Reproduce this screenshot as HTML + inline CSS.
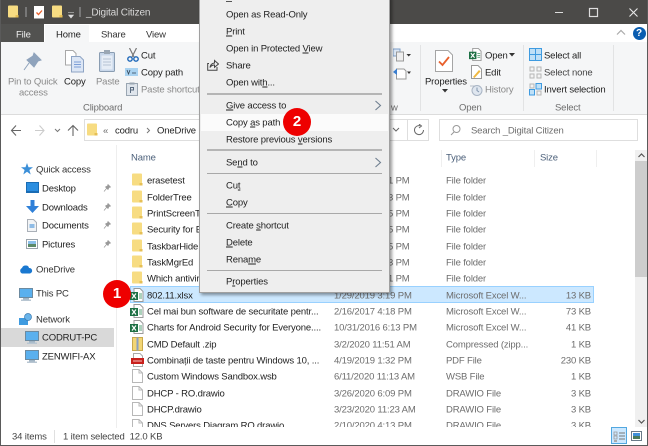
<!DOCTYPE html>
<html><head><meta charset="utf-8"><style>
html,body{margin:0;padding:0;background:#fff}
#w{position:relative;width:648px;height:446px;overflow:hidden;background:#fff;font:9.5px/12px "Liberation Sans",sans-serif;letter-spacing:-.15px;color:#222;filter:blur(.3px)}
#w div,#w svg{position:absolute}
.t{white-space:nowrap;transform:translateY(-4.500px)}
.g{color:#6d6d6d}.l{color:#8a8a8a}.n{color:#555}
.r{text-align:right;width:60px}
u{text-underline-offset:1px}
</style></head><body><div id="w">

<svg width="0" height="0" style="position:absolute"><defs>
<symbol id="fo" viewBox="0 0 11 13"><path d="M0 1.500Q0 .5 1 .5H9Q10 .5 10 1.500V12.500H1Q0 12.500 0 11.500Z" fill="#f7dc82"/><path d="M7.500 10H10.500V12.500H7.500Z" fill="#e6bf55"/></symbol>
<symbol id="xl" viewBox="0 0 14 14"><path d="M4 .5H10L13 3.500V13.500H4Z" fill="#fff" stroke="#9a9a9a"/><rect x="0" y="4" width="8" height="8" fill="#1e7145"/><path d="M2 5.500L6 10.500M6 5.500L2 10.500" stroke="#fff" stroke-width="1.200"/><path d="M9 6H12M9 8H12M9 10H12" stroke="#5aa57a"/></symbol>
<symbol id="dc" viewBox="0 0 11 14"><path d="M.5 .5H7L10.500 4V13.500H.5Z" fill="#fff" stroke="#b8b8b8"/><path d="M7 .5V4H10.500" fill="none" stroke="#b8b8b8"/></symbol>
<symbol id="pc" viewBox="0 0 14 13"><rect x=".5" y=".5" width="13" height="9" fill="#5ab0ee" stroke="#6c8aa0"/><rect x="4" y="10" width="6" height="2" fill="#a0b4c4"/><rect x="2" y="11.500" width="10" height="1.500" fill="#b8c6d2"/></symbol>
<symbol id="pin" viewBox="0 0 8 9"><path d="M5 .5L7.500 3L6 3.500L5 5.500L2.500 3L4.500 2ZM3.500 4.500L1 7.500" fill="#999" stroke="#999" stroke-width=".7"/></symbol>
</defs></svg>

<!-- title bar -->
<div style="left:0;top:0;width:648px;height:24px;background:#4b4a48"></div>
<svg style="left:8px;top:5px" width="11" height="13"><use href="#fo"/></svg>
<div style="left:25px;top:7px;width:2px;height:10px;background:#777"></div>
<svg style="left:34px;top:6px" width="11" height="13" viewBox="0 0 11 13"><rect width="10" height="12.500" fill="#fff"/><path d="M2.500 6.500L4.500 8.500L8 4.500" fill="none" stroke="#e8602c" stroke-width="1.300"/></svg>
<svg style="left:52px;top:5px" width="11" height="13"><use href="#fo"/></svg>
<svg style="left:68px;top:12px" width="6" height="7"><path d="M0 .5H6M.5 3H5.500L3 6Z" fill="#ddd" stroke="#ddd" stroke-width=".6"/></svg>
<div style="left:79px;top:7px;width:2px;height:10px;background:#777"></div>
<div class="t" style="left:86px;top:12px;color:#d8d8d8;font-size:10px">_Digital Citizen</div>
<svg style="left:550px;top:5px" width="95" height="15"><path d="M5 7.500H13" stroke="#ddd"/><rect x="39.500" y="3.500" width="8" height="8" fill="none" stroke="#ddd" stroke-width="1.200"/><path d="M79.500 3.500L87.500 11.500M87.500 3.500L79.500 11.500" stroke="#e8e8e8" stroke-width="1.100"/></svg>

<!-- tabs -->
<div style="left:0;top:24px;width:44px;height:18px;background:#525250"></div>
<div class="t" style="left:16px;top:33.500px;color:#eee">File</div>
<div style="left:45px;top:25px;width:44px;height:18px;background:#f5f6f7;z-index:1"></div>
<div class="t" style="left:56px;top:33.500px;z-index:2">Home</div>
<div class="t" style="left:101px;top:33.500px;color:#333">Share</div>
<div class="t" style="left:146px;top:33.500px;color:#333">View</div>
<svg style="left:616px;top:29px" width="10" height="7"><path d="M1 5.500L5 1.500L9 5.500" fill="none" stroke="#aaa" stroke-width="1.200"/></svg>
<div style="left:632.500px;top:26.500px;width:13px;height:13px;border-radius:50%;background:#0a5db0;color:#fff;font:bold 10px/13px 'Liberation Sans',sans-serif;text-align:center">?</div>

<!-- ribbon -->
<div style="left:1px;top:42px;width:646px;height:72px;background:#f5f6f7;border-bottom:1px solid #dcdcdc"></div>
<div style="left:420px;top:45px;width:1px;height:66px;background:#e2e3e4"></div>
<div style="left:523px;top:45px;width:1px;height:66px;background:#e2e3e4"></div>
<div style="left:613px;top:45px;width:1px;height:66px;background:#e2e3e4"></div>

<svg style="left:22px;top:52px" width="20" height="20" viewBox="0 0 20 20"><path d="M12 1L19 8L16 9L12 15L5 8L11 4ZM7 11L2 18" fill="#8fa3bc" stroke="#8fa3bc" stroke-width="1"/></svg>
<div class="t l" style="left:8px;top:81px">Pin to Quick</div>
<div class="t l" style="left:19px;top:92px">access</div>
<svg style="left:63px;top:49px" width="22" height="24" viewBox="0 0 22 24"><path d="M2.500 1.500H10L13 4.500V16H2.500Z" fill="#fff" stroke="#a8a8a8"/><path d="M8.500 7.500H17L20.500 11V23H8.500Z" fill="#dce6f5" stroke="#8ea4c4"/><path d="M11 13H18M11 15.500H18M11 18H18" stroke="#7d9fd8"/></svg>
<div class="t" style="left:64px;top:81px">Copy</div>
<svg style="left:98px;top:49px" width="18" height="24" viewBox="0 0 18 24"><rect x="1.500" y="3.500" width="15" height="19" rx="1" fill="#c8d7ea" stroke="#8a9db2"/><rect x="3.500" y="6.500" width="11" height="14" fill="#e6edf6"/><rect x="6" y="1" width="6" height="4" fill="#9aa7b4"/><path d="M5 10H13M5 13H13M5 16H13" stroke="#b5c3d4"/></svg>
<div class="t l" style="left:96px;top:81px">Paste</div>
<svg style="left:127px;top:48px" width="12" height="14" viewBox="0 0 12 14"><path d="M2.500 0L7 9M9.500 0L5 9" stroke="#777" stroke-width="1.200"/><circle cx="3" cy="11" r="2.200" fill="none" stroke="#1c66b8" stroke-width="1.400"/><circle cx="9" cy="11" r="2.200" fill="none" stroke="#1c66b8" stroke-width="1.400"/></svg>
<div class="t" style="left:141px;top:55px">Cut</div>
<svg style="left:125px;top:68px" width="13" height="8"><rect width="13" height="8" fill="#a9d2f0"/><path d="M2 2L3.500 6L5 2M7 5H11" stroke="#345" stroke-width=".8" fill="none"/></svg>
<div class="t" style="left:141px;top:72px">Copy path</div>
<svg style="left:126px;top:82px" width="12" height="14" viewBox="0 0 12 14"><rect x=".5" y="1.500" width="11" height="12" fill="#dfe5ec" stroke="#9aa6b2"/><rect x="3.500" y=".5" width="5" height="2" fill="#9aa6b2"/><path d="M4.500 11V5.500H7.500V8H4.500" fill="none" stroke="#5a6b80"/></svg>
<div class="t l" style="left:141px;top:89px">Paste shortcut</div>
<div class="t g" style="left:83px;top:107px">Clipboard</div>

<div class="t" style="left:391px;top:107px;color:#6d6d6d">w</div>
<svg style="left:393px;top:48px" width="18" height="32" viewBox="0 0 18 32"><rect x="0" y="1" width="7" height="7" fill="#dbe6f4" stroke="#7d9fc8"/><rect x="3.500" y="4" width="7" height="9" fill="#eee" stroke="#999"/><path d="M13.500 6H18L15.700 8.500Z" fill="#333"/><path d="M3.500 21H11L13 23V31H3.500Z" fill="#fff" stroke="#999"/><path d="M0 24L4 20.500V27Z" fill="#3a7fd0"/><path d="M14 23.500H18L16 26Z" fill="#333"/></svg>

<svg style="left:435px;top:50px" width="18" height="22" viewBox="0 0 18 22"><path d="M.5 .5H13L17.500 5V21.500H.5Z" fill="#fff" stroke="#a5a5a5"/><path d="M4 11.500L7.500 15L14 7" fill="none" stroke="#e8602c" stroke-width="1.800"/></svg>
<div class="t" style="left:425px;top:81px">Properties</div>
<svg style="left:442px;top:89px" width="6" height="4"><path d="M0 0H6L3 3.500Z" fill="#333"/></svg>
<div class="t g" style="left:459px;top:107px">Open</div>
<svg style="left:469px;top:48px" width="13" height="13"><use href="#xl"/></svg>
<div class="t" style="left:485px;top:55px">Open</div>
<svg style="left:509px;top:53px" width="6" height="4"><path d="M0 0H6L3 3.500Z" fill="#333"/></svg>
<svg style="left:471px;top:65px" width="11" height="14" viewBox="0 0 11 14"><path d="M.5 .5H7L10.500 4V13.500H.5Z" fill="#fff" stroke="#999"/><path d="M2 12L8 5L9.500 6.500L3.500 13Z" fill="#f0b840"/></svg>
<div class="t" style="left:485px;top:72px">Edit</div>
<svg style="left:469px;top:83px" width="14" height="13" viewBox="0 0 14 13"><path d="M1 3H7L9 5" fill="none" stroke="#b5bdc8"/><circle cx="8" cy="7.500" r="5" fill="#dfe6ef" stroke="#a8b4c4"/><path d="M8 4.500V7.500L10 9" fill="none" stroke="#8296ae"/></svg>
<div class="t l" style="left:485px;top:89px">History</div>

<svg style="left:529px;top:48px" width="13" height="13"><rect width="13" height="13" fill="#3f9be0"/><path d="M1 1H6V6H1ZM7 1H12V6H7ZM1 7H6V12H1ZM7 7H12V12H7Z" fill="#bfe0f7"/></svg>
<div class="t" style="left:544px;top:55px">Select all</div>
<svg style="left:529px;top:66px" width="13" height="13"><path d="M1 1H5V5H1ZM8 1H12V5H8ZM1 8H5V12H1ZM8 8H12V12H8Z" fill="#f4f4f4" stroke="#b5b5b5"/></svg>
<div class="t" style="left:544px;top:72px;color:#444">Select none</div>
<svg style="left:529px;top:83px" width="13" height="13"><path d="M.5 6.500H5.500V12H.5ZM7 .5H12.500V6H7Z" fill="#bfe0f7" stroke="#3f9be0"/><path d="M1 1H5V5H1ZM8 8H12V12H8Z" fill="#f4f4f4" stroke="#b5b5b5"/></svg>
<div class="t" style="left:544px;top:89px">Invert selection</div>
<div class="t g" style="left:555px;top:107px">Select</div>

<!-- address -->
<svg style="left:10px;top:124px" width="72" height="13"><path d="M1.500 6.500H11M6 1.500L1.500 6.500L6 11.500" fill="none" stroke="#666" stroke-width="1.100"/><path d="M25 6.500H34M29.500 1.500L34 6.500L29.500 11.500" fill="none" stroke="#ccc" stroke-width="1.100"/><path d="M45 5L47.500 7.500L50 5" fill="none" stroke="#777"/><path d="M63 12V2M58 6.500L63 1.500L68 6.500" fill="none" stroke="#666" stroke-width="1.100"/></svg>
<div style="left:84px;top:119px;width:345px;height:22px;border:1px solid #dedede;box-sizing:border-box"></div>
<svg style="left:87px;top:123px" width="11" height="13"><use href="#fo"/></svg>
<div class="t g" style="left:103px;top:130px">«</div>
<div class="t" style="left:115px;top:130px">codru</div>
<svg style="left:146px;top:127px" width="5" height="7"><path d="M1 1L3.500 3.500L1 6" fill="none" stroke="#777"/></svg>
<div class="t" style="left:157px;top:130px">OneDrive</div>
<svg style="left:392px;top:127px" width="8" height="6"><path d="M1 1L4 4L7 1" fill="none" stroke="#666"/></svg>
<div style="left:407px;top:119px;width:1px;height:22px;background:#dedede"></div>
<svg style="left:414px;top:124px" width="11" height="12"><path d="M9.500 6A4.500 4.500 0 1 1 6 1.700M5 0L7.500 2L5 4" fill="none" stroke="#666"/></svg>
<div style="left:439px;top:119px;width:199px;height:22px;border:1px solid #dedede;box-sizing:border-box"></div>
<svg style="left:450px;top:124px" width="11" height="12"><circle cx="6.500" cy="5" r="3.500" fill="none" stroke="#999"/><path d="M4 8L1 11" stroke="#999"/></svg>
<div class="t g" style="left:471px;top:130px">Search _Digital Citizen</div>

<!-- nav -->
<div style="left:116px;top:145px;width:1px;height:283px;background:#eee"></div>
<svg style="left:21px;top:163px" width="12" height="12"><path d="M6 0L7.500 4.300H12L8.400 7L9.700 11.500L6 8.800L2.300 11.500L3.600 7L0 4.300H4.500Z" fill="#3b8fd8"/></svg>
<div class="t" style="left:36px;top:169px;color:#333">Quick access</div>
<svg style="left:26px;top:182px" width="13" height="11" viewBox="0 0 13 11"><rect x=".5" y=".5" width="12" height="9" fill="#2b8ee0" stroke="#1a6cb4"/><rect y="9.500" width="13" height="1.500" fill="#1a6cb4"/></svg>
<div class="t" style="left:42px;top:188px">Desktop</div>
<svg style="left:26px;top:200px" width="13" height="13"><path d="M4.500 0H8.500V6H13L6.500 13L0 6H4.500Z" fill="#2f80d8"/></svg>
<div class="t" style="left:42px;top:207px">Downloads</div>
<svg style="left:27px;top:219px" width="10" height="13"><path d="M.5 .5H6.500L9.500 3.500V12.500H.5Z" fill="#f2f4f6" stroke="#aab0b8"/><rect x="2.500" y="5" width="5" height="4" fill="#8fbce6"/></svg>
<div class="t" style="left:42px;top:225px">Documents</div>
<svg style="left:26px;top:239px" width="12" height="10"><rect x=".5" y=".5" width="11" height="9" fill="#fff" stroke="#9ba4ac"/><rect x="2" y="2" width="8" height="3" fill="#8cc0ea"/><rect x="2" y="5" width="8" height="3" fill="#5c8a68"/></svg>
<div class="t" style="left:42px;top:244px">Pictures</div>
<svg style="left:103px;top:184px" width="8" height="9"><use href="#pin"/></svg>
<svg style="left:103px;top:203px" width="8" height="9"><use href="#pin"/></svg>
<svg style="left:103px;top:221px" width="8" height="9"><use href="#pin"/></svg>
<svg style="left:103px;top:240px" width="8" height="9"><use href="#pin"/></svg>
<svg style="left:19px;top:265px" width="14" height="9"><path d="M3 8.500A3 3 0 0 1 3 3Q4 .2 7 .5Q9.500 .5 10 3A2.800 2.800 0 0 1 11 8.500Z" fill="#1a78d0"/></svg>
<div class="t" style="left:36px;top:269px;color:#333">OneDrive</div>
<svg style="left:19px;top:288px" width="14" height="13"><use href="#pc"/></svg>
<div class="t" style="left:36px;top:293px;color:#333">This PC</div>
<svg style="left:19px;top:313px" width="14" height="13" viewBox="0 0 14 13"><rect x="0" y="5" width="9" height="7" fill="#3f9be0"/><circle cx="9" cy="4" r="3.500" fill="#6ab4ea" stroke="#3a7ab0" stroke-width=".7"/></svg>
<div class="t" style="left:36px;top:319px;color:#333">Network</div>
<div style="left:1px;top:328px;width:113px;height:19px;background:#d9d9d9"></div>
<svg style="left:25px;top:331px" width="14" height="13"><use href="#pc"/></svg>
<div class="t" style="left:42px;top:337px">CODRUT-PC</div>
<svg style="left:25px;top:350px" width="14" height="13"><use href="#pc"/></svg>
<div class="t" style="left:42px;top:356px">ZENWIFI-AX</div>

<!-- header -->
<div class="t" style="left:131px;top:157px;color:#4c607a">Name</div>
<div class="t" style="left:446px;top:157px;color:#4c607a">Type</div>
<div class="t" style="left:540px;top:157px;color:#4c607a">Size</div>
<div style="left:441px;top:150px;width:1px;height:17px;background:#efefef"></div>
<div style="left:534px;top:150px;width:1px;height:17px;background:#efefef"></div>
<div style="left:596px;top:150px;width:1px;height:17px;background:#efefef"></div>

<!-- scrollbar -->
<div style="left:635px;top:150px;width:12px;height:277px;background:#f0f0f0"></div>
<div style="left:635px;top:161px;width:12px;height:116px;background:#cdcdcd"></div>
<svg style="left:638px;top:153px" width="7" height="5"><path d="M.5 4L3.500 1L6.500 4" fill="none" stroke="#555" stroke-width="1.200"/></svg>
<svg style="left:638px;top:419px" width="7" height="5"><path d="M.5 1L3.500 4L6.500 1" fill="none" stroke="#555" stroke-width="1.200"/></svg>

<!-- selected row -->
<div style="left:130px;top:286px;width:464px;height:17px;background:#cce8ff;border:1px solid #99d1ff;box-sizing:border-box"></div>

<!-- files -->
<svg style="left:132px;top:173px" width="11" height="13"><use href="#fo"/></svg><div class="t" style="left:147px;top:180px">erasetest</div>
<svg style="left:132px;top:190px" width="11" height="13"><use href="#fo"/></svg><div class="t" style="left:147px;top:196.500px">FolderTree</div>
<svg style="left:132px;top:206px" width="11" height="13"><use href="#fo"/></svg><div class="t" style="left:147px;top:213px">PrintScreenTool</div>
<svg style="left:132px;top:222px" width="11" height="13"><use href="#fo"/></svg><div class="t" style="left:147px;top:229px">Security for Everyone</div>
<svg style="left:132px;top:239px" width="11" height="13"><use href="#fo"/></svg><div class="t" style="left:147px;top:245.500px">TaskbarHide</div>
<svg style="left:132px;top:255px" width="11" height="13"><use href="#fo"/></svg><div class="t" style="left:147px;top:262px">TaskMgrEd</div>
<svg style="left:132px;top:271px" width="11" height="13"><use href="#fo"/></svg><div class="t" style="left:147px;top:278px">Which antivirus</div>

<svg style="left:130px;top:288px" width="14" height="14"><use href="#xl"/></svg><div class="t" style="left:147px;top:294.500px">802.11.xlsx</div>
<svg style="left:130px;top:304px" width="14" height="14"><use href="#xl"/></svg><div class="t" style="left:147px;top:311px">Cel mai bun software de securitate pentr...</div>
<svg style="left:130px;top:320px" width="14" height="14"><use href="#xl"/></svg><div class="t" style="left:147px;top:327px">Charts for Android Security for Everyone....</div>
<svg style="left:132px;top:337px" width="11" height="14" viewBox="0 0 11 14"><path d="M.5 .5H10.500V13.500H.5Z" fill="#f3d675" stroke="#c9a94c"/><rect x="4.500" y=".5" width="2" height="13" fill="#8aa0c0"/></svg><div class="t" style="left:147px;top:344px">CMD Default .zip</div>
<svg style="left:131px;top:353px" width="13" height="14" viewBox="0 0 13 14"><path d="M2.500 .5H9L11.500 3V13.500H2.500Z" fill="#fff" stroke="#aaa"/><rect y="5" width="13" height="6" fill="#c8201c"/><path d="M2 8H11" stroke="#f3c0be"/></svg><div class="t" style="left:147px;top:360px">Combinații de taste pentru Windows 10, ...</div>
<svg style="left:132px;top:369px" width="11" height="14"><use href="#dc"/></svg><div class="t" style="left:147px;top:376px">Custom Windows Sandbox.wsb</div>
<svg style="left:132px;top:386px" width="11" height="14"><use href="#dc"/></svg><div class="t" style="left:147px;top:392.500px">DHCP - RO.drawio</div>
<svg style="left:132px;top:402px" width="11" height="14"><use href="#dc"/></svg><div class="t" style="left:147px;top:409px">DHCP.drawio</div>

<div class="t g" style="left:334px;top:294.500px">1/29/2019 3:19 PM</div>
<div class="t g" style="left:334px;top:311px">2/16/2017 4:18 PM</div>
<div class="t g" style="left:334px;top:327px">10/31/2016 6:13 PM</div>
<div class="t g" style="left:334px;top:344px">3/2/2020 11:51 AM</div>
<div class="t g" style="left:334px;top:360px">4/19/2019 1:32 PM</div>
<div class="t g" style="left:334px;top:376px">6/11/2020 11:13 AM</div>
<div class="t g" style="left:334px;top:392.500px">3/26/2020 6:09 PM</div>
<div class="t g" style="left:334px;top:409px">3/23/2020 11:23 AM</div>

<div class="t g" style="left:388px;top:180px">1 PM</div>
<div class="t g" style="left:388px;top:196.500px">3 PM</div>
<div class="t g" style="left:388px;top:213px">5 PM</div>
<div class="t g" style="left:388px;top:229px">5 PM</div>
<div class="t g" style="left:388px;top:245.500px">5 PM</div>
<div class="t g" style="left:388px;top:262px">3 PM</div>
<div class="t g" style="left:388px;top:278px">1 PM</div>

<div class="t g" style="left:446px;top:180px">File folder</div>
<div class="t g" style="left:446px;top:196.500px">File folder</div>
<div class="t g" style="left:446px;top:213px">File folder</div>
<div class="t g" style="left:446px;top:229px">File folder</div>
<div class="t g" style="left:446px;top:245.500px">File folder</div>
<div class="t g" style="left:446px;top:262px">File folder</div>
<div class="t g" style="left:446px;top:278px">File folder</div>
<div class="t g" style="left:446px;top:294.500px">Microsoft Excel W...</div>
<div class="t g" style="left:446px;top:311px">Microsoft Excel W...</div>
<div class="t g" style="left:446px;top:327px">Microsoft Excel W...</div>
<div class="t g" style="left:446px;top:344px">Compressed (zipp...</div>
<div class="t g" style="left:446px;top:360px">PDF File</div>
<div class="t g" style="left:446px;top:376px">WSB File</div>
<div class="t g" style="left:446px;top:392.500px">DRAWIO File</div>
<div class="t g" style="left:446px;top:409px">DRAWIO File</div>

<div class="t g r" style="left:531px;top:294.500px">13 KB</div>
<div class="t g r" style="left:531px;top:311px">73 KB</div>
<div class="t g r" style="left:531px;top:327px">41 KB</div>
<div class="t g r" style="left:531px;top:344px">1 KB</div>
<div class="t g r" style="left:531px;top:360px">230 KB</div>
<div class="t g r" style="left:531px;top:376px">1 KB</div>
<div class="t g r" style="left:531px;top:392.500px">3 KB</div>
<div class="t g r" style="left:531px;top:409px">3 KB</div>

<!-- clipped last row -->
<div style="left:117px;top:418px;width:518px;height:9px;overflow:hidden">
<svg style="left:15px;top:1px" width="11" height="14"><use href="#dc"/></svg>
<div class="t" style="left:30px;top:7px">DNS Servers Diagram RO.drawio</div>
<div class="t g" style="left:217px;top:7px">2/10/2020 4:13 PM</div>
<div class="t g" style="left:329px;top:7px">DRAWIO File</div>
<div class="t g r" style="left:414px;top:7px">3 KB</div>
</div>

<!-- status -->
<div class="t" style="left:12px;top:436px;color:#444">34 items</div>
<div style="left:54px;top:430px;width:1px;height:13px;background:#e0e0e0"></div>
<div class="t" style="left:63px;top:436px;color:#444">1 item selected&nbsp; 12.0 KB</div>
<div style="left:611px;top:427px;width:16px;height:17px;background:#cce8ff;border:1px solid #52a8e0;box-sizing:border-box"></div>
<svg style="left:613px;top:431px" width="12" height="11"><path d="M1 1H4V4H1ZM1 5H4V8H1Z" fill="none" stroke="#999" stroke-width=".8"/><path d="M1 9H4V11H1Z" fill="#aaa"/><path d="M6 2H12M6 5H12M6 8H12" stroke="#777"/></svg>
<svg style="left:631px;top:431px" width="11" height="10"><rect x=".5" y=".5" width="10" height="9" fill="#fff" stroke="#6a7a88"/><rect x="2" y="2" width="7" height="3" fill="#3f8fd8"/><rect x="2" y="5" width="7" height="3" fill="#4a7a5a"/></svg>

<!-- window borders -->
<div style="left:0;top:0;width:1px;height:446px;background:#5a5a5a"></div>
<div style="left:647px;top:0;width:1px;height:446px;background:#5a5a5a"></div>
<div style="left:0;top:445px;width:648px;height:1px;background:#5a5a5a"></div>

<!-- context menu -->
<div style="left:199px;top:-4px;width:191px;height:297px;background:#eee;border:1px solid #a0a0a0;box-sizing:border-box;box-shadow:2px 2px 3px rgba(0,0,0,.4)"></div>
<div style="left:201px;top:114px;width:187px;height:17px;background:#fbfbfb"></div>
<div style="left:207px;top:93px;width:175px;height:2px;background:#b5b5b5"></div>
<div style="left:207px;top:149px;width:175px;height:2px;background:#b5b5b5"></div>
<div style="left:207px;top:173px;width:175px;height:1px;background:#a8a8a8"></div>
<div style="left:207px;top:213px;width:175px;height:1px;background:#a8a8a8"></div>
<div style="left:207px;top:270px;width:175px;height:1px;background:#a8a8a8"></div>
<div style="left:226px;top:1px;width:6px;height:1px;background:#555"></div>
<div class="t" style="left:226px;top:14px">Open as Read-Only</div>
<div class="t" style="left:226px;top:31px"><u>P</u>rint</div>
<div class="t" style="left:226px;top:48px">Open in Protected <u>V</u>iew</div>
<svg style="left:207px;top:59px" width="12" height="12" viewBox="0 0 12 12"><path d="M2 4.500H.7V11.300H10V8" fill="none" stroke="#444" stroke-width="1"/><path d="M3 8.500Q3.500 4.500 7.500 4V1.500L11.500 5L7.500 8.300V6Q4.500 6 3 8.500Z" fill="none" stroke="#444" stroke-width="1"/></svg>
<div class="t" style="left:226px;top:65px">Share</div>
<div class="t" style="left:226px;top:82px">Open wit<u>h</u>...</div>
<div class="t" style="left:226px;top:105px"><u>G</u>ive access to</div>
<svg style="left:374px;top:100px" width="8" height="11"><path d="M1.500 1L6.500 5.500L1.500 10" fill="none" stroke="#6f7f90" stroke-width="1.100"/></svg>
<div class="t" style="left:226px;top:122px">Copy <u>a</u>s path</div>
<div class="t" style="left:226px;top:139px">Restore previous <u>v</u>ersions</div>
<div class="t" style="left:226px;top:162px">Se<u>n</u>d to</div>
<svg style="left:374px;top:157px" width="8" height="11"><path d="M1.500 1L6.500 5.500L1.500 10" fill="none" stroke="#6f7f90" stroke-width="1.100"/></svg>
<div class="t" style="left:226px;top:185px">Cu<u>t</u></div>
<div class="t" style="left:226px;top:202px"><u>C</u>opy</div>
<div class="t" style="left:226px;top:225px">Create <u>s</u>hortcut</div>
<div class="t" style="left:226px;top:242px"><u>D</u>elete</div>
<div class="t" style="left:226px;top:259px">Rena<u>m</u>e</div>
<div class="t" style="left:226px;top:281px">P<u>r</u>operties</div>

<!-- badges -->
<div style="left:283px;top:108px;width:28px;height:28px;border-radius:50%;background:#ee0000;color:#fff;font:bold 15px/28px 'Liberation Sans',sans-serif;text-align:center;letter-spacing:0">2</div>
<div style="left:103px;top:280px;width:28px;height:28px;border-radius:50%;background:#ee0000;color:#fff;font:bold 15px/28px 'Liberation Sans',sans-serif;text-align:center;letter-spacing:0">1</div>
</div></body></html>
